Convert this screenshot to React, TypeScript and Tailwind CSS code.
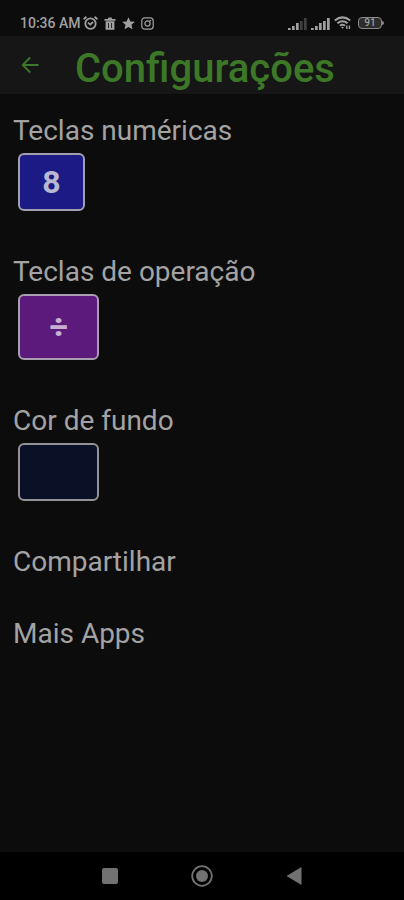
import type { ReactNode } from 'react';

interface SettingProps {
  label: string;
  children: ReactNode;
}

function Setting({ label, children }: SettingProps) {
  return (
    <section className="flex flex-col items-start gap-1">
      <h2 className="text-[28px] leading-9">{label}</h2>
      {children}
    </section>
  );
}

function AlarmIcon() {
  return (
    <svg width="15" height="14" viewBox="0 0 15 14" fill="none" stroke="currentColor" strokeWidth="1.8">
      <circle cx="7.5" cy="7.6" r="5.2" />
      <path d="M5 6.6l2.3 2 2.7-2.6M0.6 3.2l2.8-2.4M14.4 3.2l-2.8-2.4" />
    </svg>
  );
}

function TrashIcon() {
  return (
    <svg width="12" height="13" viewBox="0 0 12 13" fill="currentColor">
      <path d="M0.5 2h3.3l.7-1.5h3L8.2 2h3.3v1.8h-11z" />
      <path fillRule="evenodd" d="M1.6 4.2h8.8v8.5H1.6zM4.2 6v5H5V6zM7 6v5h.8V6z" />
    </svg>
  );
}

function StarIcon() {
  return (
    <svg width="13" height="13" viewBox="0 0 13 13" fill="currentColor">
      <path d="M6.5 0.2l1.9 4.2 4.5.4-3.4 3 1 4.5-4-2.4-4 2.4 1-4.5-3.4-3 4.5-.4z" />
    </svg>
  );
}

function CameraIcon() {
  return (
    <svg width="13" height="13" viewBox="0 0 13 13" fill="none" stroke="currentColor" strokeWidth="1.2">
      <rect x="0.8" y="0.8" width="11.4" height="11.4" rx="3" />
      <circle cx="6.5" cy="6.5" r="2.6" />
      <circle cx="9.5" cy="3.5" r="0.8" fill="currentColor" stroke="none" />
    </svg>
  );
}

function SignalIcon({ bars }: { bars: number }) {
  return (
    <svg width="19" height="13" viewBox="0 0 19 13" fill="currentColor">
      {[2, 4, 7, 9, 12].map((height, index) => (
        <rect
          key={height}
          x={index * 4}
          y={13 - height}
          width="2.7"
          height={height}
          opacity={index < bars ? 1 : 0.35}
        />
      ))}
    </svg>
  );
}

function WifiIcon() {
  return (
    <svg width="18" height="14" viewBox="0 0 18 14" fill="none" stroke="currentColor" strokeWidth="2">
      <path d="M0.8 4.6Q8.5-1.8 16.2 4.6M3.4 7.2q5.1-4 10.2 0M6 9.8q2.5-2 5 0" />
      <path d="M7 11h3l-1.5 1.8z" fill="currentColor" stroke="none" />
      <path d="M12.8 9.6v3.4M15.4 9.6v3.4" strokeWidth="1.4" />
    </svg>
  );
}

function Battery({ level }: { level: number }) {
  return (
    <span className="flex items-center">
      <span className="flex h-3 w-6 items-center justify-center rounded border border-[#8a8a8a] bg-[#2d2d2d] text-[10px] leading-none font-medium">
        {level}
      </span>
      <span className="h-1 w-0.5 rounded-r-sm bg-[#8a8a8a]" />
    </span>
  );
}

function StatusBar() {
  return (
    <div className="flex h-9 items-end justify-between px-5 pb-1.5 text-[#a0a0a0]">
      <div className="flex h-[14px] items-center">
        <span className="text-[14px] leading-none font-medium">10:36 AM</span>
        <div className="ml-0.5 flex items-center gap-1.5">
          <AlarmIcon />
          <TrashIcon />
          <StarIcon />
          <CameraIcon />
        </div>
      </div>
      <div className="flex h-[14px] items-center gap-1">
        <SignalIcon bars={3} />
        <SignalIcon bars={5} />
        <WifiIcon />
        <div className="ml-0.5">
          <Battery level={91} />
        </div>
      </div>
    </div>
  );
}

function NavigationBar() {
  return (
    <nav className="flex h-12 items-center justify-center gap-[68px] bg-black text-[#727272]">
      <button type="button" aria-label="Recentes" className="flex size-6 items-center justify-center">
        <span className="size-4 rounded-xs bg-current" />
      </button>
      <button type="button" aria-label="Início" className="flex size-6 items-center justify-center">
        <svg width="22" height="22" viewBox="0 0 22 22" fill="none" stroke="currentColor">
          <circle cx="11" cy="11" r="9.8" strokeWidth="1.8" />
          <circle cx="11" cy="11" r="6" fill="currentColor" stroke="none" />
        </svg>
      </button>
      <button type="button" aria-label="Voltar ao app anterior" className="flex size-6 items-center justify-center">
        <svg width="16" height="18" viewBox="0 0 16 18" fill="currentColor">
          <path d="M15.5 0v18L0.5 9z" />
        </svg>
      </button>
    </nav>
  );
}

export default function App() {
  return (
    <div className="flex min-h-screen flex-col bg-[#0c0c0c] font-['Roboto',sans-serif] text-[#a3a3a3]">
      <StatusBar />

      {/* Header */}
      <header className="flex h-[58px] items-center bg-[#161616] pl-5 text-[#3c7827]">
        <button type="button" aria-label="Voltar" className="flex size-5 items-center justify-center">
          <svg width="18" height="18" viewBox="0 0 18 18" fill="none" stroke="currentColor" strokeWidth="1.8">
            <path d="M17.5 9H2M9.2 1.5L1.7 9l7.5 7.5" />
          </svg>
        </button>
        <h1 className="pt-2 pl-[35px] text-[40px] leading-[48px] font-medium">Configurações</h1>
      </header>

      {/* Settings */}
      <main className="flex flex-1 flex-col gap-[43px] px-[13px] pt-[19px] pb-8">
        <Setting label="Teclas numéricas">
          <button
            type="button"
            aria-label="Cor das teclas numéricas: 8"
            className="ml-[5px] h-[58px] w-[67px] rounded-md border-2 border-[#a2a0b0] bg-[#1c1a84] text-[32px] leading-none font-bold text-[#b9b8d2]"
          >
            8
          </button>
        </Setting>

        <Setting label="Teclas de operação">
          <button
            type="button"
            aria-label="Cor das teclas de operação: ÷"
            className="ml-[5px] h-[66px] w-[81px] rounded-md border-2 border-[#a79fad] bg-[#5c1a7c] text-[32px] leading-none font-black text-[#c6b2d0]"
          >
            ÷
          </button>
        </Setting>

        <Setting label="Cor de fundo">
          <button
            type="button"
            aria-label="Cor de fundo"
            className="ml-[5px] h-[58px] w-[81px] rounded-md border-2 border-[#929297] bg-[#0a1026]"
          />
        </Setting>

        <div className="flex flex-col items-start gap-9">
          <button type="button" className="text-[28px] leading-9">
            Compartilhar
          </button>
          <button type="button" className="text-[28px] leading-9">
            Mais Apps
          </button>
        </div>
      </main>

      <NavigationBar />
    </div>
  );
}
